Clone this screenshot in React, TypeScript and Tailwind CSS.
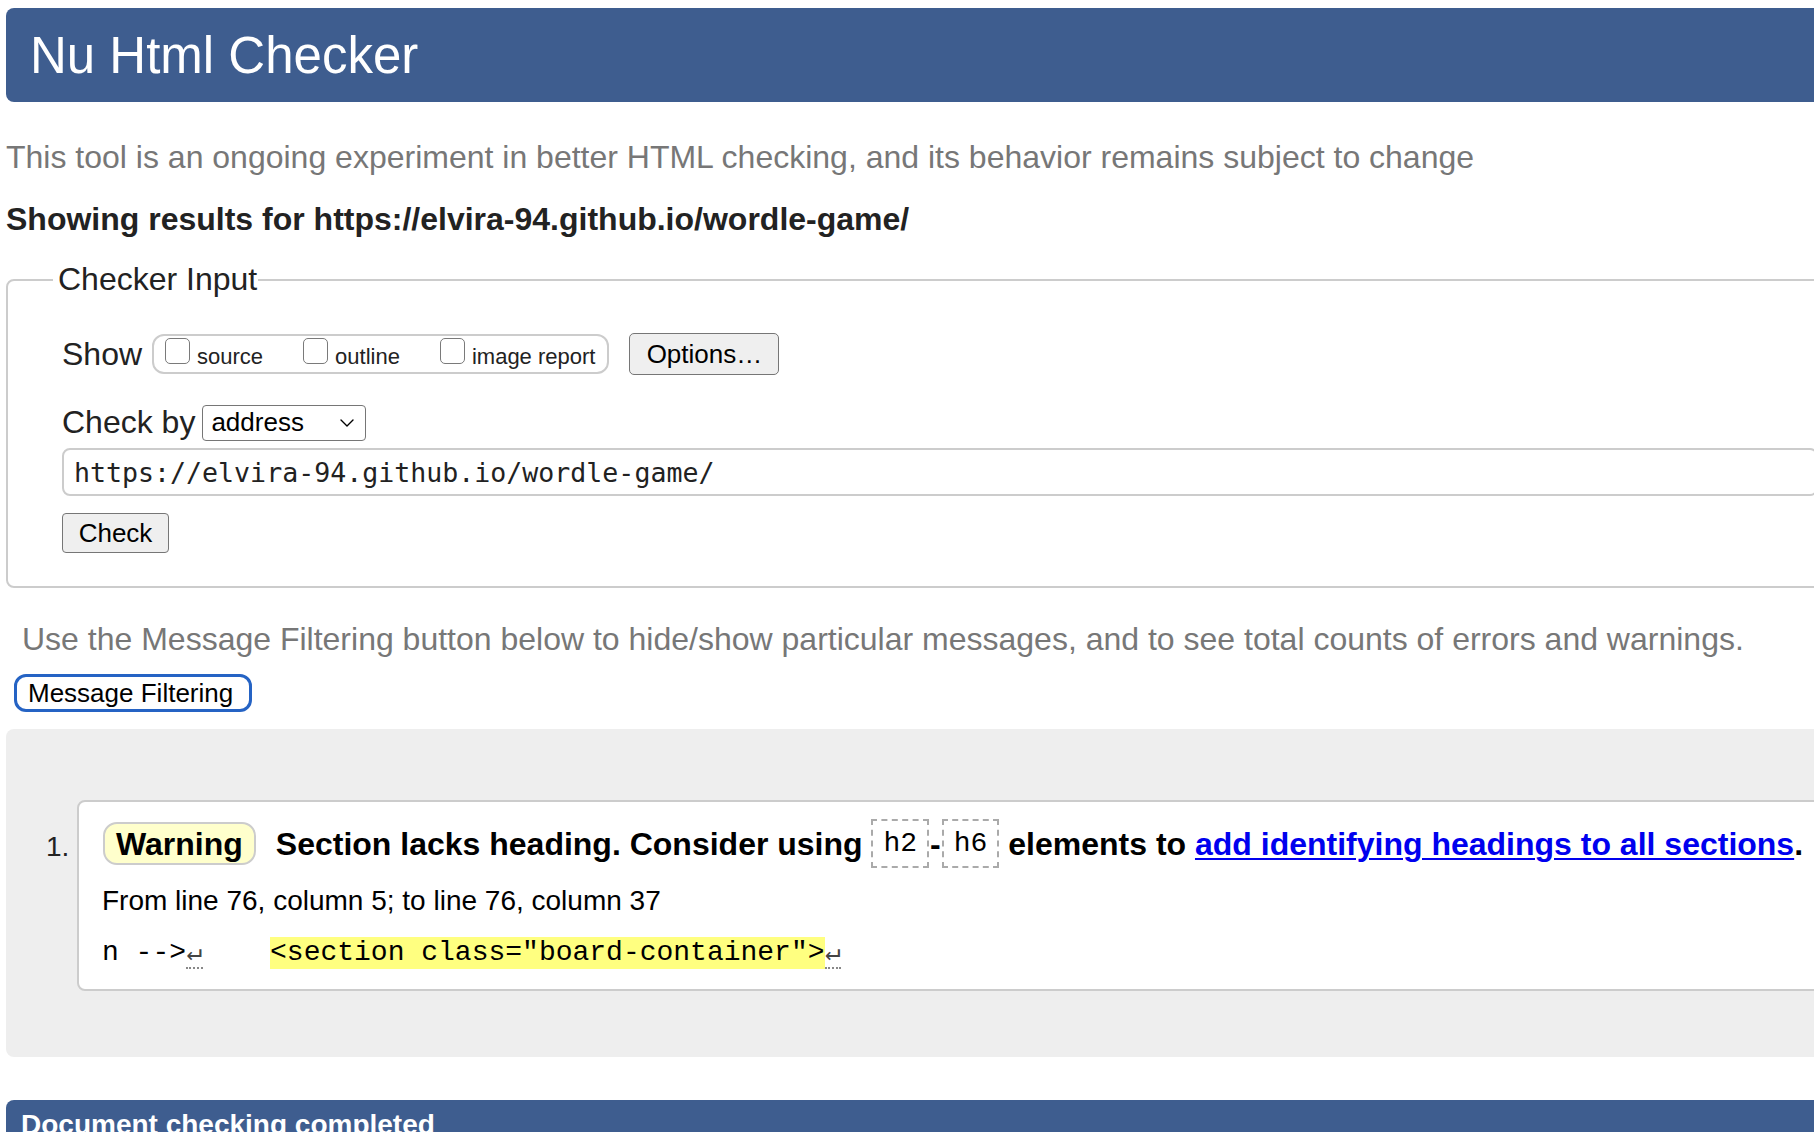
import React from 'react';
import { ChevronDown } from 'lucide-react';

const Checkbox = ({ label }: { label: string }) => (
    <label className="flex items-end gap-[7px]">
        <span className="block h-[26px] w-[25px] rounded-[5px] border-[1.5px] border-[#7a7a7a] bg-white" />
        <span className="text-[22px] leading-[15px] text-[#222]">{label}</span>
    </label>
);

const Code = ({ children }: { children: React.ReactNode }) => (
    <span className="flex h-[49px] items-center border-2 border-dashed border-[#aaa] px-[10px] font-['Liberation_Mono',monospace] text-[28px] font-normal">
        {children}
    </span>
);

const Ret = () => (
    <span className="inline-block w-[16.8px] self-end border-b-2 border-dotted border-[#888] text-center text-[26px] leading-[28px] text-[#444]">
        ↵
    </span>
);

const App = () => {
    return (
        <div className="min-h-screen w-full overflow-hidden bg-white font-['Liberation_Sans',Arial,sans-serif] text-[#222]">
            <div className="w-[1840px] pl-[6px]">
                <header className="mt-[8px] flex h-[94px] items-center rounded-[8px] bg-[#3e5d8f] pl-[24px]">
                    <h1 className="text-[51px] leading-none text-white">Nu Html Checker</h1>
                </header>

                <p className="mt-[37px] text-[32px] leading-[37px] text-[#777]">
                    This tool is an ongoing experiment in better HTML checking, and its behavior remains subject to change
                </p>
                <p className="mt-[25px] text-[32px] font-bold leading-[37px] text-[#222]">
                    Showing results for https://elvira-94.github.io/wordle-game/
                </p>

                <fieldset className="mt-[23px] rounded-[8px] border-2 border-[#ccc] pb-[33px] pl-[45px] pr-[20px]">
                    <legend className="pl-[5px] pr-[1px] text-[32px] leading-[37px] text-[#222]">Checker Input</legend>
                    <div className="pl-[9px]">
                        <div className="mt-[35px] flex h-[42px] items-center">
                            <span className="text-[32px] leading-[37px]">Show</span>
                            <div className="ml-[10px] flex h-[40px] items-start gap-[40px] rounded-[12px] border-2 border-[#ccc] pl-[11px] pr-[12px] pt-[2px]">
                                <Checkbox label="source" />
                                <Checkbox label="outline" />
                                <Checkbox label="image report" />
                            </div>
                            <button className="ml-[20px] h-[42px] w-[150px] rounded-[5px] border-[1.5px] border-[#767676] bg-[#efefef] text-[26px] text-black">
                                Options…
                            </button>
                        </div>

                        <div className="mt-[29px] flex h-[37px] items-center">
                            <span className="text-[32px] leading-[37px]">Check by</span>
                            <div className="ml-[7px] flex h-[36px] w-[164px] items-center justify-between rounded-[4px] border-[1.5px] border-[#767676] pl-[8px] pr-[6px] text-[26px] text-black">
                                <span>address</span>
                                <ChevronDown size={24} strokeWidth={1.4} />
                            </div>
                        </div>

                        <div className="mt-[7px] flex h-[48px] w-full items-center rounded-[8px] border-2 border-[#ccc] pl-[10px] pt-[2px] font-['DejaVu_Sans_Mono',monospace] text-[26.6px] text-[#222]">
                            https://elvira-94.github.io/wordle-game/
                        </div>

                        <button className="mt-[17px] h-[40px] w-[107px] rounded-[4px] border-[1.5px] border-[#767676] bg-[#efefef] text-[26px] text-black">
                            Check
                        </button>
                    </div>
                </fieldset>

                <p className="mt-[33px] pl-[16px] text-[32px] leading-[37px] text-[#777]">
                    Use the Message Filtering button below to hide/show particular messages, and to see total counts of errors and warnings.
                </p>

                <button className="ml-[8px] mt-[16px] flex h-[38px] w-[238px] items-center rounded-[12px] border-[3px] border-[#2563c4] bg-white pl-[11px] text-[26px] text-black">
                    Message Filtering
                </button>

                <div className="mt-[17px] flex rounded-[8px] bg-[#eeeeee] pb-[66px] pl-[40px] pt-[71px]">
                    <span className="mt-[31px] w-[31px] text-[28px] leading-[32px] text-[#222]">1.</span>
                    <div className="flex-1 rounded-[8px] border-2 border-[#ccc] bg-white pb-[20px] pl-[23px] pt-[17px]">
                        <div className="flex h-[49px] items-center whitespace-pre text-[32px] font-bold text-black">
                            <span className="ml-[1px] flex h-[43px] items-center rounded-[14px] border-2 border-[#ccc] bg-[#ffffcc] px-[11px]">
                                Warning
                            </span>
                            <span className="ml-[20px]">Section lacks heading. Consider using </span>
                            <Code>h2</Code>
                            <span className="mx-[1px]">-</span>
                            <Code>h6</Code>
                            <span> elements to </span>
                            <a href="#" className="text-[#0000ee] underline decoration-2 underline-offset-[3px]">
                                add identifying headings to all sections
                            </a>
                            <span>.</span>
                        </div>
                        <p className="mt-[17px] text-[28px] leading-[32px] text-black">
                            From line 76, column 5; to line 76, column 37
                        </p>
                        <div className="mt-[20px] flex h-[32px] items-center whitespace-pre font-['Liberation_Mono',monospace] text-[28px] leading-[32px] text-black">
                            <span>n --&gt;</span>
                            <Ret />
                            <span>    </span>
                            <span className="bg-[#ffff80]">&lt;section class="board-container"&gt;</span>
                            <Ret />
                        </div>
                    </div>
                </div>

                <div className="mt-[43px] h-[60px] rounded-t-[8px] bg-[#3e5d8f] pl-[15px] pt-[9px]">
                    <p className="text-[28px] font-bold leading-[32px] text-white">Document checking completed</p>
                </div>
            </div>
        </div>
    );
};

export default App;
